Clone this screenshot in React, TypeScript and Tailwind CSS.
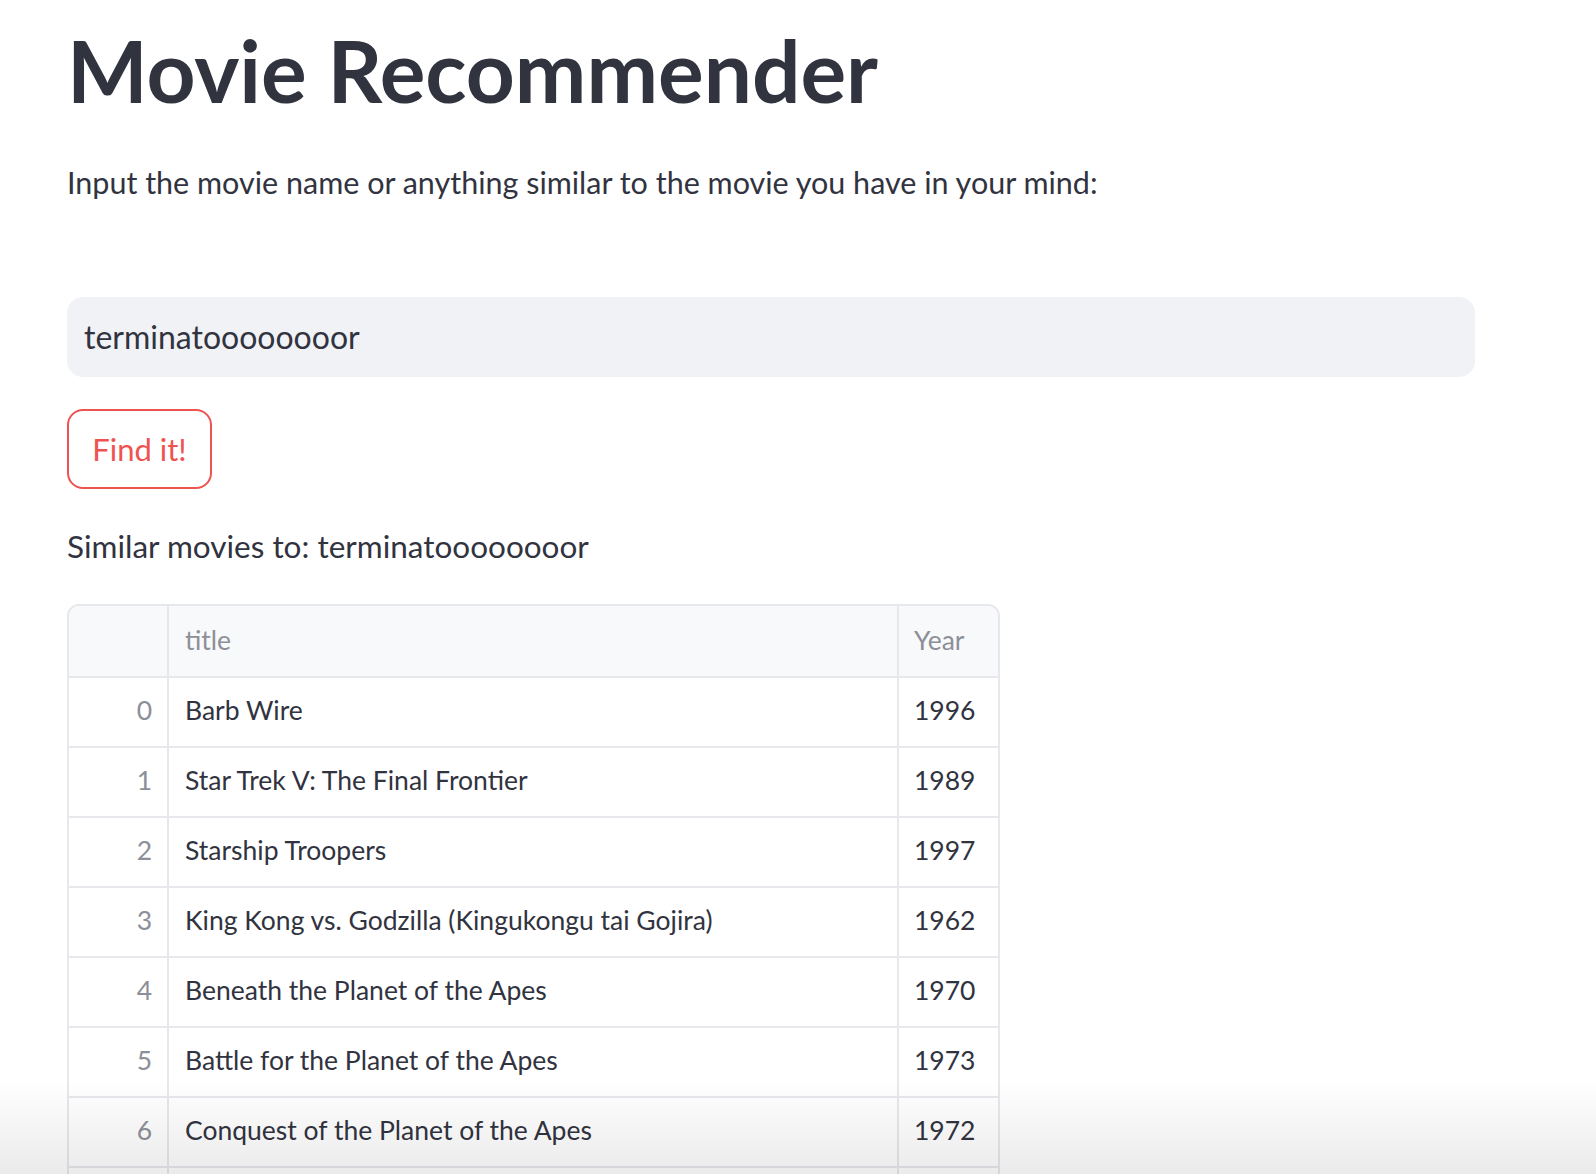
import React from 'react';

const movies = [
  { title: 'Barb Wire', year: 1996 },
  { title: 'Star Trek V: The Final Frontier', year: 1989 },
  { title: 'Starship Troopers', year: 1997 },
  { title: 'King Kong vs. Godzilla (Kingukongu tai Gojira)', year: 1962 },
  { title: 'Beneath the Planet of the Apes', year: 1970 },
  { title: 'Battle for the Planet of the Apes', year: 1973 },
  { title: 'Conquest of the Planet of the Apes', year: 1972 },
  { title: 'Escape from the Planet of the Apes', year: 1971 },
];

const query = 'terminatoooooooor';

const App: React.FC = () => {
  return (
    <div className="relative h-[1174px] overflow-hidden bg-white font-['Lato',sans-serif] text-[#31333f]">
      <div className="px-[67px]">
        <h1 className="pt-[28px] text-[85.5px] font-bold leading-none">Movie Recommender</h1>
        <p className="mt-[53px] text-[30.5px] leading-none">
          Input the movie name or anything similar to the movie you have in your mind:
        </p>

        <div className="mt-[100px] flex h-[80px] w-[1408px] items-center rounded-[16px] bg-[#f0f2f6] px-[17px] text-[32px]">
          {query}
        </div>

        <button
          type="button"
          className="mt-[32px] flex h-[80px] w-[145px] items-center justify-center rounded-[16px] border-2 border-[#ef5350] text-[31px] text-[#ef5350]"
        >
          Find it!
        </button>

        <p className="mt-[42px] text-[31.5px] leading-none">Similar movies to: {query}</p>

        <div className="mt-[41px] w-[933px] overflow-hidden rounded-[12px] border-2 border-[#e7e8ec] text-[26.5px]">
          <div className="flex h-[70px] bg-[#f8f9fb] text-[#8d8f98]">
            <div className="w-[100px] border-r-2 border-[#e7e8ec]" />
            <div className="flex w-[730px] items-center border-r-2 border-[#e7e8ec] px-[16px]">title</div>
            <div className="flex flex-1 items-center px-[15px]">Year</div>
          </div>
          {movies.map((m, i) => (
            <div key={i} className="flex h-[70px] border-t-2 border-[#e7e8ec]">
              <div className="flex w-[100px] items-center justify-end border-r-2 border-[#e7e8ec] pb-[2px] pr-[15px] text-[#8d8f98]">
                {i}
              </div>
              <div className="flex w-[730px] items-center border-r-2 border-[#e7e8ec] pb-[2px] px-[16px]">{m.title}</div>
              <div className="flex flex-1 items-center pb-[2px] px-[15px]">{m.year}</div>
            </div>
          ))}
        </div>
      </div>

      <div className="pointer-events-none absolute inset-x-0 bottom-0 h-[95px] bg-gradient-to-b from-transparent to-black/[0.08]" />
    </div>
  );
};

export default App;
